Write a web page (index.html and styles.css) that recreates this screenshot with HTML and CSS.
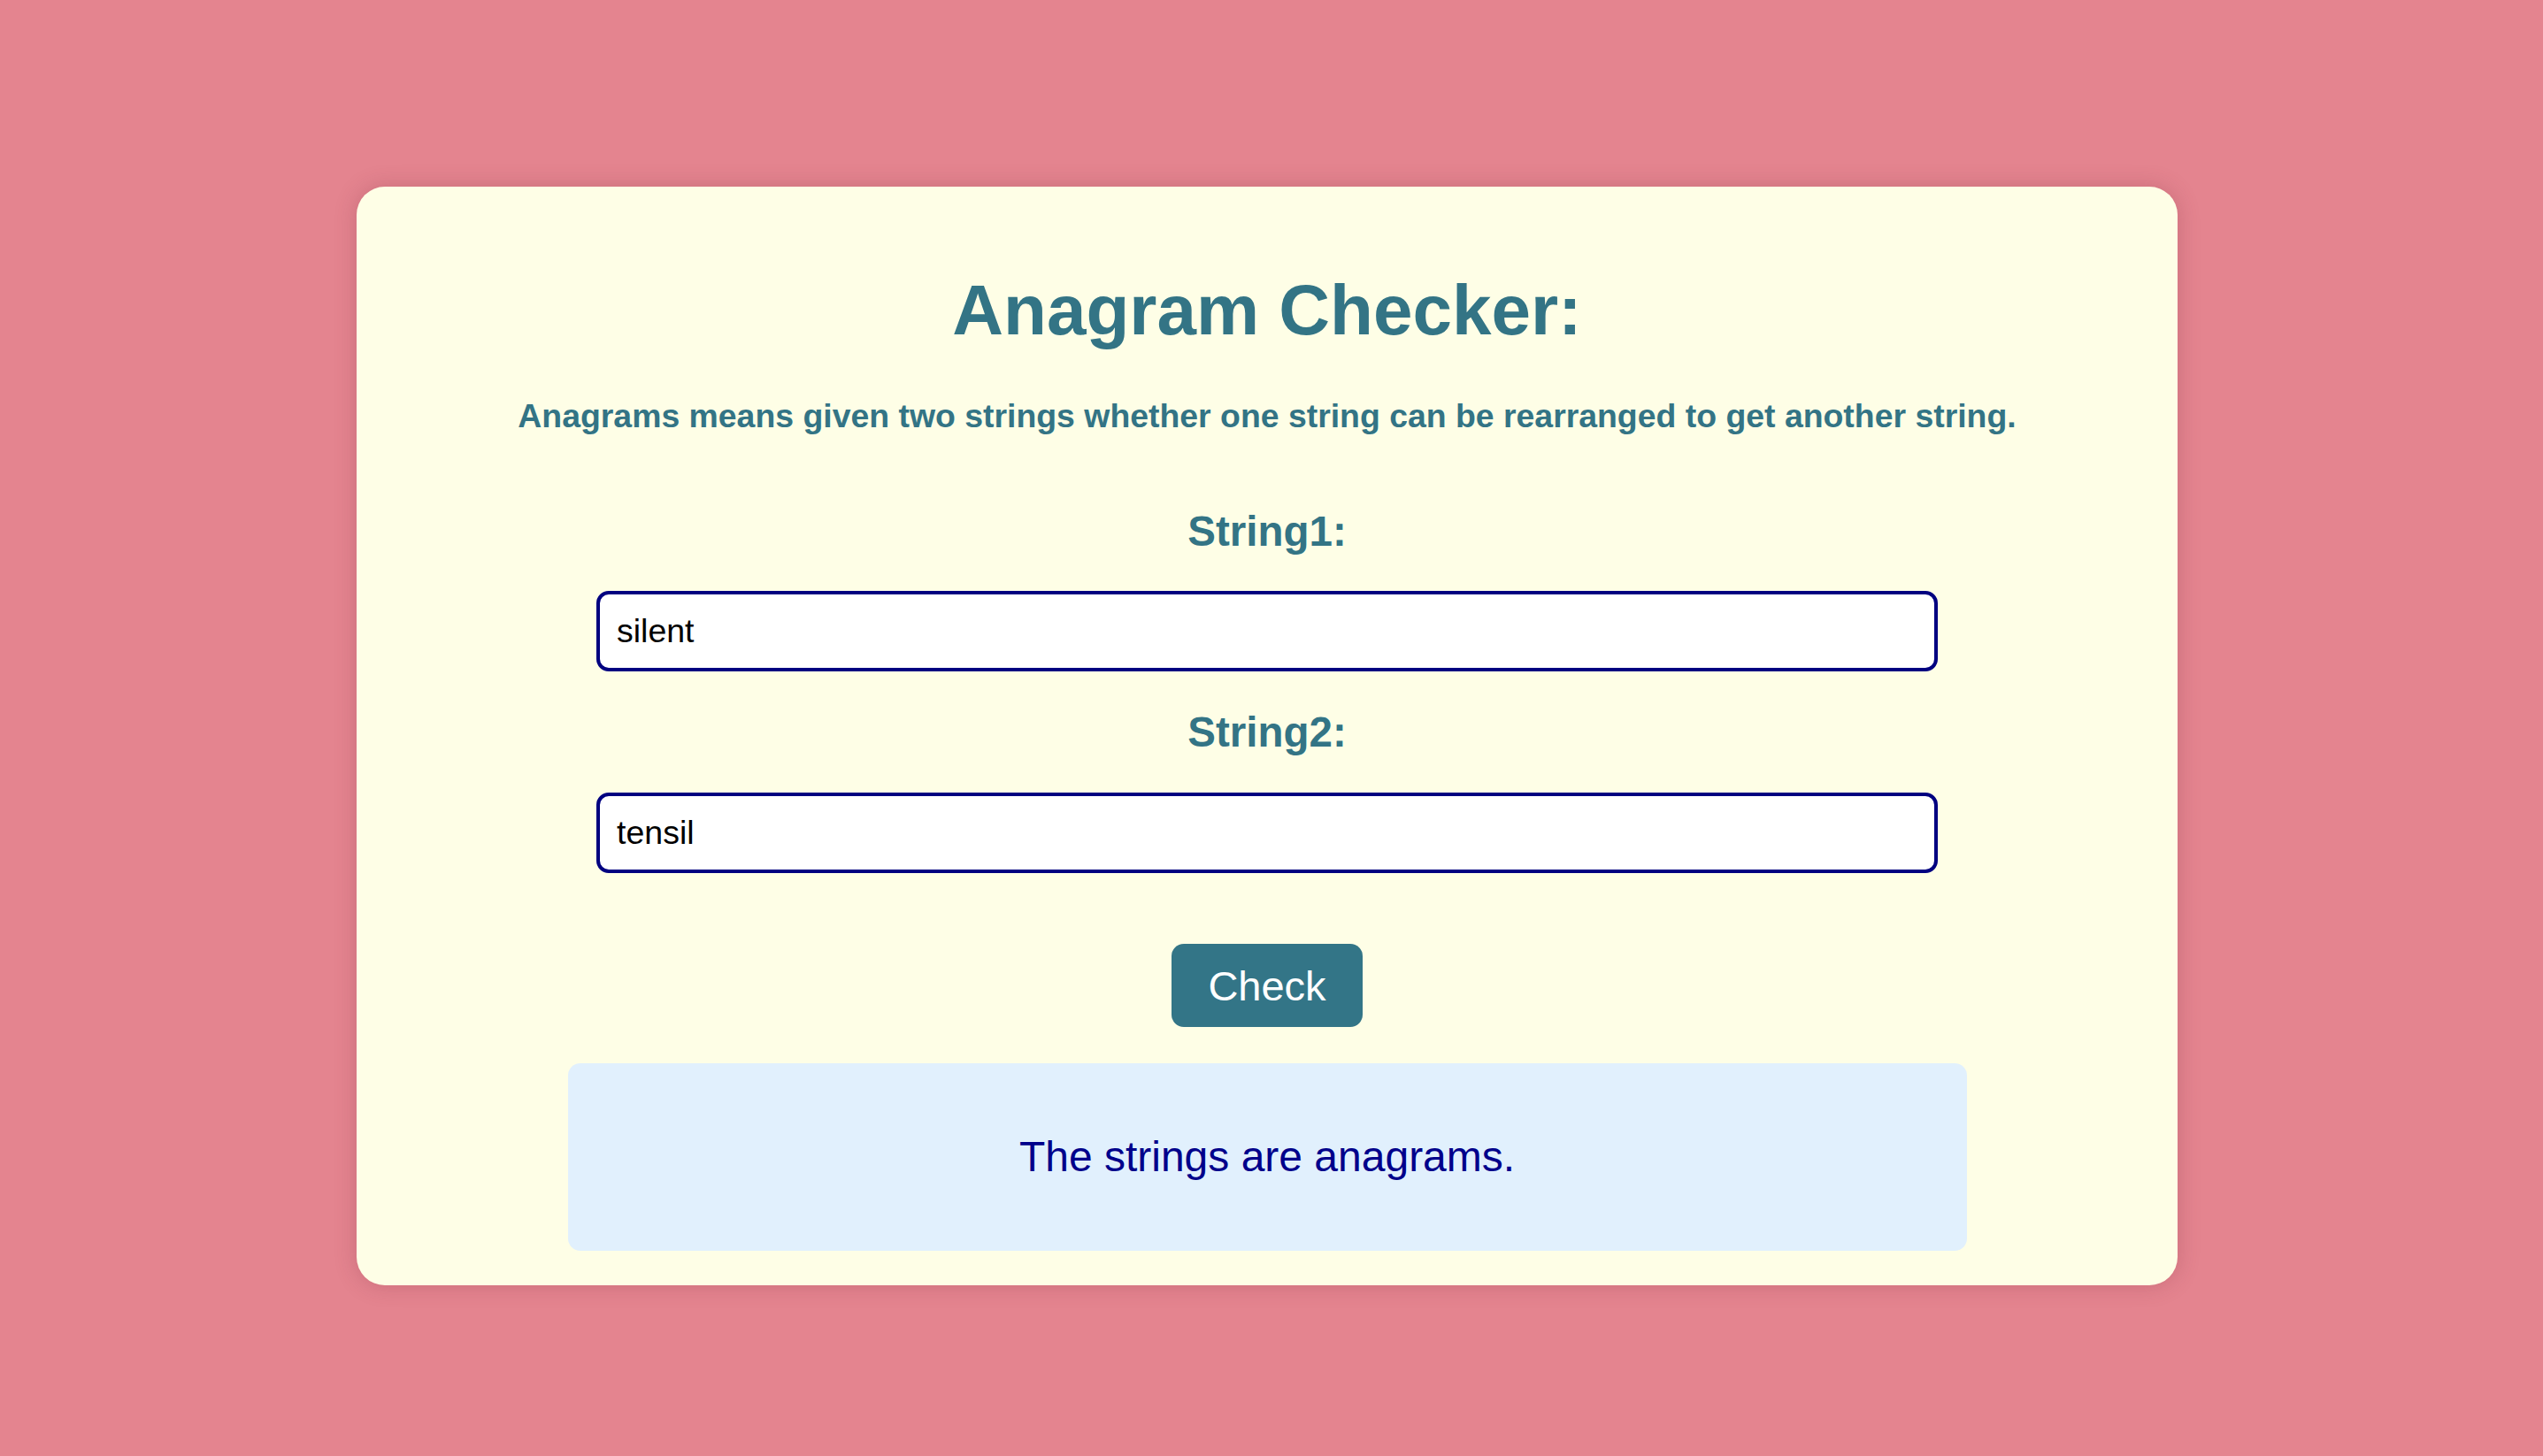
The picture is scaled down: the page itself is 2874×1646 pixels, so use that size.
FILE: index.html
```html
<!DOCTYPE html>
<html lang="en">
<head>
<meta charset="utf-8">
<title>Anagram Checker</title>
<link rel="stylesheet" href="styles.css">
</head>
<body>
<main class="page">
  <section class="card">
    <h1 class="title">Anagram Checker:</h1>
    <p class="subtitle">Anagrams means given two strings whether one string can be rearranged to get another string.</p>
    <label class="label label-first" for="s1">String1:</label>
    <input class="field field-first" id="s1" type="text" value="silent">
    <label class="label" for="s2">String2:</label>
    <input class="field" id="s2" type="text" value="tensil">
    <button class="check" type="button">Check</button>
    <div class="result">The strings are anagrams.</div>
  </section>
</main>
</body>
</html>
```

FILE: styles.css
```css
html, body {
  margin: 0;
  padding: 0;
}
body {
  background: #e4848f;
  font-family: "Liberation Sans", Arial, Helvetica, sans-serif;
  min-height: 100vh;
}
.page {
  display: flex;
  justify-content: center;
  padding: 211px 10px 0 0;
}
.card {
  box-sizing: border-box;
  width: 2058px;
  background: #fefee6;
  border-radius: 32px;
  box-shadow: 0 0 24px rgba(120, 40, 60, 0.25);
  padding: 40px 0 39px;
  display: flex;
  flex-direction: column;
  align-items: center;
}
.title {
  margin: 54px 0 0;
  font-size: 80px;
  font-weight: 700;
  line-height: normal;
  color: #337485;
}
.subtitle {
  margin: 52px 0 0;
  font-size: 37.4px;
  font-weight: 700;
  line-height: normal;
  color: #337485;
}
.label {
  display: block;
  margin-top: 41px;
  font-size: 47.5px;
  font-weight: 700;
  line-height: normal;
  color: #337485;
}
.label-first {
  margin-top: 81px;
}
.field {
  box-sizing: border-box;
  width: 1516px;
  height: 91px;
  margin-top: 41px;
  padding: 0 19px;
  border: 4px solid #000080;
  border-radius: 14px;
  background: #ffffff;
  font-family: "Liberation Sans", Arial, sans-serif;
  font-size: 37.5px;
  color: #000000;
  outline: none;
}
.field-first {
  margin-top: 40px;
}
.check {
  box-sizing: border-box;
  height: 94px;
  margin-top: 80px;
  padding: 0 41px;
  border: none;
  border-radius: 14px;
  background: #337587;
  color: #ffffff;
  font-family: "Liberation Sans", Arial, sans-serif;
  font-size: 47px;
}
.result {
  box-sizing: border-box;
  width: 1581px;
  margin-top: 41px;
  padding: 78px 0 79px;
  border-radius: 14px;
  background: #e1f0fd;
  color: #00008b;
  font-size: 48px;
  line-height: normal;
  text-align: center;
}
```
